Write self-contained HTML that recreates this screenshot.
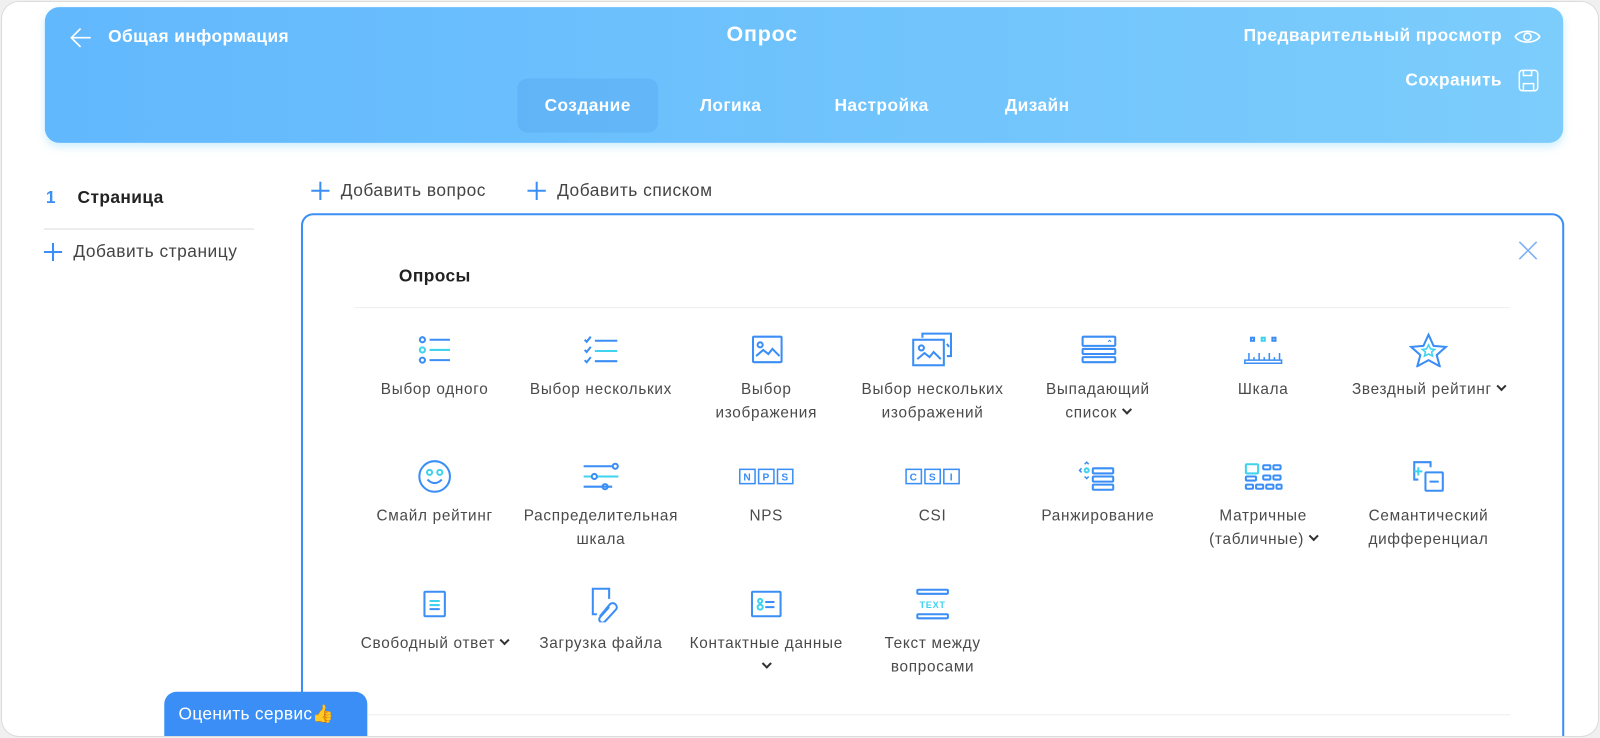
<!DOCTYPE html>
<html><head><meta charset="utf-8"><style>
*{box-sizing:border-box;margin:0;padding:0}
body{width:1600px;height:738px;background:#f0f0f0;font-family:"Liberation Sans",sans-serif;overflow:hidden;position:relative}
.frame{position:absolute;left:1px;top:1px;width:1598px;height:736px;background:#fff;border:1px solid #dcdcdc;border-radius:18px;overflow:hidden}
.wrap{position:absolute;left:0;top:0;width:1568px;height:722px;overflow:hidden;transform:scale(1.0204);transform-origin:0 0}
.hdr{position:absolute;left:42px;top:5px;width:1488px;height:133px;border-radius:14px;background:linear-gradient(90deg,#62b8fd,#7ccdfc);box-shadow:0 4px 8px rgba(120,210,250,.35);color:#fff;letter-spacing:.4px}
.t{position:absolute;white-space:nowrap}
.tab{position:absolute;top:70px;height:53px;line-height:53px;font-size:17px;font-weight:bold;color:#fff;text-align:center}
.g{position:absolute;width:162px;text-align:center;font-size:15px;letter-spacing:.7px;color:#4a4a4a;line-height:23px}
.g .ic{height:36px;display:flex;align-items:center;justify-content:center;margin-bottom:9px}
.chev{display:inline-block;width:7px;height:7px;border-right:2px solid #333;border-bottom:2px solid #333;transform:rotate(45deg);margin:0 0 4px 6px}
.add{font-size:17px;color:#444;letter-spacing:.5px;display:flex;align-items:center}
.add svg{margin-right:11px}
</style></head><body>
<div class="frame">
<div class="wrap">
<div class="hdr">
 <svg class="t" style="left:24px;top:20px" width="22" height="20" viewBox="0 0 22 20"><path d="M11 1L2 10l9 9M2 10h19" stroke="#fff" stroke-width="1.6" fill="none"/></svg>
 <div class="t" style="left:62px;top:19px;font-size:17px;font-weight:bold">Общая информация</div>
 <div class="t" style="left:668px;top:15px;font-size:21px;font-weight:bold;letter-spacing:.8px">Опрос</div>
 <div class="t" style="right:60px;top:18px;font-size:17px;font-weight:bold">Предварительный просмотр</div>
 <svg class="t" style="right:22px;top:20px" width="26" height="18" viewBox="0 0 26 18"><path d="M1 9C5 2 21 2 25 9C21 16 5 16 1 9Z" stroke="#fff" stroke-width="1.6" fill="none"/><circle cx="13" cy="9" r="3.5" stroke="#fff" stroke-width="1.6" fill="none"/></svg>
 <div class="t" style="right:60px;top:62px;font-size:17px;font-weight:bold">Сохранить</div>
 <svg class="t" style="right:24px;top:61px" width="20" height="22" viewBox="0 0 20 22"><rect x="1" y="1" width="18" height="20" rx="3" stroke="#fff" stroke-width="1.5" fill="none"/><path d="M5 1v5h8V1M5 21v-7h10v7" stroke="#fff" stroke-width="1.5" fill="none"/></svg>
 <div class="tab" style="left:463px;width:138px;background:rgba(70,150,230,.25);border-radius:10px">Создание</div>
 <div class="tab" style="left:632px;width:80px">Логика</div>
 <div class="tab" style="left:765px;width:110px">Настройка</div>
 <div class="tab" style="left:930px;width:85px">Дизайн</div>
</div>

<div class="t" style="left:43px;top:182px;font-size:17px;font-weight:bold;color:#3a8ef5">1</div>
<div class="t" style="left:74px;top:182px;font-size:17px;font-weight:bold;color:#222;letter-spacing:.4px">Страница</div>
<div class="t" style="left:41px;top:222px;width:206px;height:1px;background:#ddd"></div>
<div class="t add" style="left:41px;top:235px"><svg width="18" height="18" viewBox="0 0 18 18"><path d="M9 0v18M0 9h18" stroke="#3a8ef5" stroke-width="2"/></svg>Добавить страницу</div>
<div class="t add" style="left:303px;top:175px"><svg width="18" height="18" viewBox="0 0 18 18"><path d="M9 0v18M0 9h18" stroke="#3a8ef5" stroke-width="2"/></svg>Добавить вопрос</div>
<div class="t add" style="left:515px;top:175px"><svg width="18" height="18" viewBox="0 0 18 18"><path d="M9 0v18M0 9h18" stroke="#3a8ef5" stroke-width="2"/></svg>Добавить списком</div>

<div class="t" style="left:293px;top:207px;width:1238px;height:540px;border:2px solid #3a8ef5;border-radius:12px"></div>
<svg class="t" style="left:1486px;top:234px" width="19" height="19" viewBox="0 0 19 19"><path d="M1 1l17 17M18 1L1 18" stroke="#7fb2f5" stroke-width="1.6"/></svg>
<div class="t" style="left:389px;top:259px;font-size:17px;font-weight:bold;color:#222;letter-spacing:.4px">Опросы</div>
<div class="t" style="left:345px;top:299px;width:1133px;height:1px;background:#eee"></div>
<div class="t" style="left:345px;top:698px;width:1133px;height:1px;background:#eee"></div>

<!-- row 1 -->
<div class="g" style="left:343px;top:323px"><div class="ic"><svg width="40" height="32" viewBox="0 0 40 32"><g fill="none" stroke="#3a8ef5" stroke-width="2"><circle cx="8" cy="6" r="2.5"/><circle cx="8" cy="16" r="2.5" stroke="#3fd3ee"/><circle cx="8" cy="26" r="2.5"/><path d="M15 6h20M15 26h20"/><path d="M15 16h20" stroke="#3fd3ee"/></g></svg></div>Выбор одного</div>
<div class="g" style="left:506px;top:323px"><div class="ic"><svg width="40" height="32" viewBox="0 0 40 32"><g fill="none" stroke-width="2"><path d="M4 6l2 2 4-5M4 16l2 2 4-5M4 26l2 2 4-5" stroke="#3a8ef5"/><path d="M14 7h22M14 27h22" stroke="#3a8ef5"/><path d="M14 17h22" stroke="#3fd3ee"/></g></svg></div>Выбор нескольких</div>
<div class="g" style="left:668px;top:323px"><div class="ic"><svg width="40" height="32" viewBox="0 0 40 32"><g fill="none" stroke="#3a8ef5" stroke-width="2"><rect x="7" y="3" width="28" height="25" rx="1"/><circle cx="14" cy="11" r="2.5"/><path d="M10 22l7-6 5 4 4-5 7 7"/></g></svg></div>Выбор<br>изображения</div>
<div class="g" style="left:831px;top:323px"><div class="ic"><svg width="44" height="36" viewBox="0 0 44 36"><g fill="none" stroke="#3a8ef5" stroke-width="2"><path d="M12 6V2h28v22h-4"/><rect x="3" y="8" width="30" height="25"/><circle cx="11" cy="16" r="2.5"/><path d="M7 27l7-6 5 4 4-5 7 7M36 12l2 3"/></g></svg></div>Выбор нескольких<br>изображений</div>
<div class="g" style="left:993px;top:323px"><div class="ic"><svg width="40" height="32" viewBox="0 0 40 32"><g fill="none" stroke="#3a8ef5" stroke-width="2"><rect x="5" y="3" width="32" height="9" rx="1"/><rect x="5" y="15" width="32" height="5" rx="1"/><rect x="5" y="23" width="32" height="5" rx="1"/><path d="M30 8l1.5-1.5L33 8" stroke-width="1"/></g></svg></div>Выпадающий<br>список<span class="chev"></span></div>
<div class="g" style="left:1155px;top:323px"><div class="ic"><svg width="40" height="32" viewBox="0 0 40 32"><g fill="none" stroke-width="2"><rect x="8" y="4" width="3" height="3" stroke="#3a8ef5"/><rect x="18.5" y="4" width="3" height="3" stroke="#3fd3ee"/><rect x="29" y="4" width="3" height="3" stroke="#3a8ef5"/><path d="M2 26h36v3H2zM6 26v-7M11 26v-3M16 26v-7M21 26v-3M26 26v-7M31 26v-3M36 26v-7" stroke="#3a8ef5" stroke-width="1.5"/></g></svg></div>Шкала</div>
<div class="g" style="left:1317px;top:323px"><div class="ic"><svg width="40" height="34" viewBox="0 0 40 34"><path d="M20 2l5 11 12 1-9 8 3 11-11-6-11 6 3-11-9-8 12-1z" fill="none" stroke="#3a8ef5" stroke-width="2"/><path d="M20 12l2 4 4 .5-3 2.5 1 4-4-2-4 2 1-4-3-2.5 4-.5z" fill="none" stroke="#3fd3ee" stroke-width="1.5"/></svg></div>Звездный рейтинг<span class="chev"></span></div>
<!-- row 2 -->
<div class="g" style="left:343px;top:447px"><div class="ic"><svg width="40" height="34" viewBox="0 0 40 34"><g fill="none" stroke-width="2"><circle cx="20" cy="17" r="15" stroke="#3a8ef5"/><circle cx="15" cy="13" r="2.5" stroke="#3fd3ee"/><circle cx="25" cy="13" r="2.5" stroke="#3fd3ee"/><path d="M13 20q7 7 14 0" stroke="#3a8ef5"/></g></svg></div>Смайл рейтинг</div>
<div class="g" style="left:506px;top:447px"><div class="ic"><svg width="40" height="34" viewBox="0 0 40 34"><g fill="none" stroke-width="2"><path d="M3 7h28M3 27h28" stroke="#3a8ef5"/><circle cx="34" cy="7" r="2.5" stroke="#3a8ef5"/><path d="M3 17h8M16 17h21" stroke="#3fd3ee"/><circle cx="13.5" cy="17" r="2.5" stroke="#3a8ef5"/><circle cx="24" cy="27" r="2.5" stroke="#3a8ef5"/></g></svg></div>Распределительная<br>шкала</div>
<div class="g" style="left:668px;top:447px"><div class="ic"><svg width="54" height="34" viewBox="0 0 54 34"><g fill="none" stroke="#3a8ef5" stroke-width="1.5"><rect x="1" y="10" width="15" height="14"/><rect x="19.5" y="10" width="15" height="14"/><rect x="38" y="10" width="15" height="14"/></g><g font-family="Liberation Sans" font-size="10" font-weight="bold" fill="#3a8ef5" text-anchor="middle"><text x="8.5" y="21">N</text><text x="27" y="21">P</text><text x="45.5" y="21">S</text></g></svg></div>NPS</div>
<div class="g" style="left:831px;top:447px"><div class="ic"><svg width="54" height="34" viewBox="0 0 54 34"><g fill="none" stroke="#3a8ef5" stroke-width="1.5"><rect x="1" y="10" width="15" height="14"/><rect x="19.5" y="10" width="15" height="14"/><rect x="38" y="10" width="15" height="14"/></g><g font-family="Liberation Sans" font-size="10" font-weight="bold" fill="#3a8ef5" text-anchor="middle"><text x="8.5" y="21">C</text><text x="27" y="21">S</text><text x="45.5" y="21">I</text></g></svg></div>CSI</div>
<div class="g" style="left:993px;top:447px"><div class="ic"><svg width="40" height="34" viewBox="0 0 40 34"><g fill="none" stroke="#3a8ef5" stroke-width="2"><rect x="15" y="9" width="20" height="5" rx="1"/><rect x="15" y="17" width="20" height="5" rx="1"/><rect x="15" y="25" width="20" height="5" rx="1"/><path d="M7 5l2-2 2 2M7 17l2 2 2-2M4 9l-2 2 2 2" stroke-width="1.5"/><circle cx="9" cy="11" r="2" stroke="#3fd3ee"/></g></svg></div>Ранжирование</div>
<div class="g" style="left:1155px;top:447px"><div class="ic"><svg width="40" height="34" viewBox="0 0 40 34"><g fill="none" stroke-width="2"><rect x="3" y="5" width="12" height="9" rx="1" stroke="#3fd3ee"/><g stroke="#3a8ef5"><rect x="20" y="6" width="7" height="4" rx="1"/><rect x="30" y="6" width="7" height="4" rx="1"/><rect x="20" y="16" width="7" height="4" rx="1"/><rect x="30" y="16" width="7" height="4" rx="1"/><rect x="3" y="25" width="7" height="4" rx="1"/><rect x="13" y="25" width="7" height="4" rx="1"/><rect x="23" y="25" width="7" height="4" rx="1"/><rect x="33" y="25" width="5" height="4" rx="1"/><rect x="3" y="17" width="10" height="4" rx="1"/></g></g></svg></div>Матричные<br>(табличные)<span class="chev"></span></div>
<div class="g" style="left:1317px;top:447px"><div class="ic"><svg width="40" height="34" viewBox="0 0 40 34"><g fill="none" stroke="#3a8ef5" stroke-width="2"><path d="M10 20H6v-17h16v5"/><rect x="17" y="13" width="17" height="18" rx="1"/><path d="M10 8v8M6 12h8" stroke="#3fd3ee"/><path d="M21 22h9"/></g></svg></div>Семантический<br>дифференциал</div>
<!-- row 3 -->
<div class="g" style="left:343px;top:572px"><div class="ic"><svg width="40" height="34" viewBox="0 0 40 34"><g fill="none" stroke="#3a8ef5" stroke-width="2"><rect x="10" y="5" width="20" height="24" rx="1"/><path d="M15 14h10M15 18h10" stroke="#3fd3ee"/><path d="M15 22h10"/></g></svg></div>Свободный ответ<span class="chev"></span></div>
<div class="g" style="left:506px;top:572px"><div class="ic"><svg width="40" height="36" viewBox="0 0 40 36"><g fill="none" stroke="#3a8ef5" stroke-width="2"><path d="M16 28h-4V3h16v10"/><path d="M19 30l10-12a4 4 0 0 1 6 5l-11 12a3 3 0 0 1-5-4l9-10"/></g></svg></div>Загрузка файла</div>
<div class="g" style="left:668px;top:572px"><div class="ic"><svg width="40" height="34" viewBox="0 0 40 34"><g fill="none" stroke-width="2"><rect x="6" y="5" width="28" height="24" rx="1" stroke="#3a8ef5"/><circle cx="14" cy="14" r="2" stroke="#3fd3ee"/><circle cx="14" cy="20" r="2.5" stroke="#3fd3ee"/><path d="M19 15h9M19 20h9" stroke="#3a8ef5"/></g></svg></div>Контактные данные<br><span class="chev" style="margin-left:0"></span></div>
<div class="g" style="left:831px;top:572px"><div class="ic"><svg width="40" height="34" viewBox="0 0 40 34"><g fill="none" stroke="#3a8ef5" stroke-width="2"><rect x="5" y="3" width="30" height="4" rx="1"/><rect x="5" y="27" width="30" height="4" rx="1"/></g><text x="20" y="21" font-family="Liberation Sans" font-size="9" font-weight="bold" fill="#3fd3ee" text-anchor="middle">TEXT</text></svg></div>Текст между<br>вопросами</div>

<div class="t" style="left:159px;top:676px;width:199px;height:46px;background:#3a8ef5;border-radius:12px 12px 0 0;color:#fff;font-size:17px;letter-spacing:.3px;padding:12px 0 0 14px">Оценить сервис👍</div>
</div>
</div>
</body></html>
